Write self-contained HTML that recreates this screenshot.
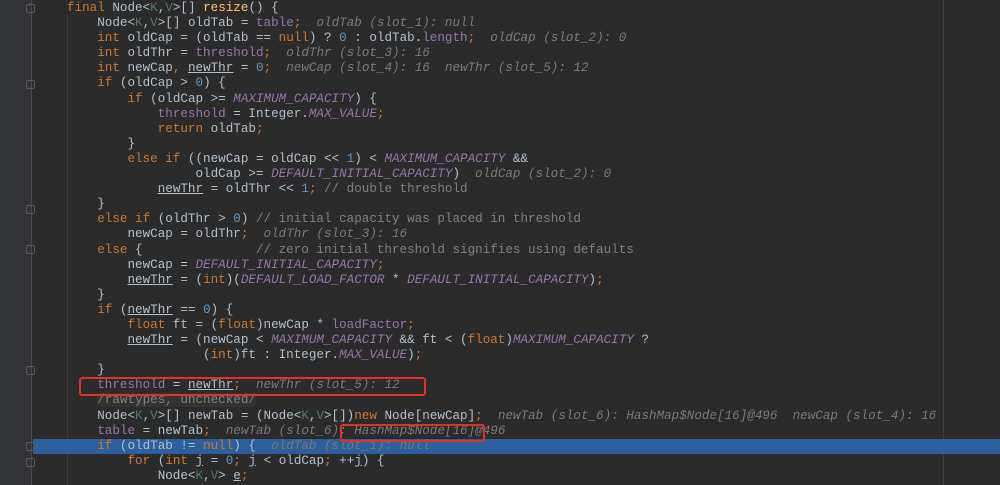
<!DOCTYPE html>
<html><head><meta charset="utf-8"><style>
body{margin:0;width:1000px;height:485px;background:#2b2b2b;overflow:hidden;position:relative;font-family:"Liberation Mono",monospace;font-size:12.6px;color:#b3c0cc}
.g{position:absolute;left:0;top:0;width:32px;height:485px;background:#313335}
.gl{position:absolute;left:31px;top:0;width:1px;height:485px;background:#4a4a4a}
.ig{position:absolute;left:67px;top:15px;width:1px;height:470px;background:#3b3b3b}
.rm{position:absolute;left:943px;top:0;width:1px;height:485px;background:#3d3d3d}
.hl{position:absolute;left:33px;top:439px;width:967px;height:15px;background:#2d5f9c}
.code{position:absolute;left:67px;top:1px;white-space:pre;line-height:15.1px}
.k{color:#cc7832}.f{color:#9876aa}.n{color:#6897bb}.c{color:#808080}.t{color:#507874}.m{color:#ffc66d}
.ci{color:#9876aa;font-style:italic}.d{color:#7a7a7a;font-style:italic}.u{text-decoration:underline}
.box{position:absolute;border:2px solid #e0322a;border-radius:3px}
.fm{position:absolute;left:26px;width:9px;height:9px;border:1px solid #5a5a5a;border-radius:2px;box-sizing:border-box}
</style></head><body>
<div class="g"></div><div class="gl"></div><div class="ig"></div><div class="rm"></div>
<div class="hl"></div>
<div class="fm" style="top:4px"></div><div class="fm" style="top:80px"></div><div class="fm" style="top:205px"></div><div class="fm" style="top:245px"></div><div class="fm" style="top:366px"></div><div class="fm" style="top:442px"></div><div class="fm" style="top:458px"></div>
<div class="code"><span class="k">final</span> Node&lt;<span class="t">K</span>,<span class="t">V</span>&gt;[] <span class="m">resize</span>() {
    Node&lt;<span class="t">K</span>,<span class="t">V</span>&gt;[] oldTab = <span class="f">table</span><span class="k">;</span>  <span class="d">oldTab (slot_1): null</span>
    <span class="k">int</span> oldCap = (oldTab == <span class="k">null</span>) ? <span class="n">0</span> : oldTab.<span class="f">length</span><span class="k">;</span>  <span class="d">oldCap (slot_2): 0</span>
    <span class="k">int</span> oldThr = <span class="f">threshold</span><span class="k">;</span>  <span class="d">oldThr (slot_3): 16</span>
    <span class="k">int</span> newCap<span class="k">,</span> <span class="u">newThr</span> = <span class="n">0</span><span class="k">;</span>  <span class="d">newCap (slot_4): 16  newThr (slot_5): 12</span>
    <span class="k">if</span> (oldCap &gt; <span class="n">0</span>) {
        <span class="k">if</span> (oldCap &gt;= <span class="ci">MAXIMUM_CAPACITY</span>) {
            <span class="f">threshold</span> = Integer.<span class="ci">MAX_VALUE</span><span class="k">;</span>
            <span class="k">return</span> oldTab<span class="k">;</span>
        }
        <span class="k">else if</span> ((newCap = oldCap &lt;&lt; <span class="n">1</span>) &lt; <span class="ci">MAXIMUM_CAPACITY</span> &amp;&amp;
                 oldCap &gt;= <span class="ci">DEFAULT_INITIAL_CAPACITY</span>)  <span class="d">oldCap (slot_2): 0</span>
            <span class="u">newThr</span> = oldThr &lt;&lt; <span class="n">1</span><span class="k">;</span> <span class="c">// double threshold</span>
    }
    <span class="k">else if</span> (oldThr &gt; <span class="n">0</span>) <span class="c">// initial capacity was placed in threshold</span>
        newCap = oldThr<span class="k">;</span>  <span class="d">oldThr (slot_3): 16</span>
    <span class="k">else</span> {               <span class="c">// zero initial threshold signifies using defaults</span>
        newCap = <span class="ci">DEFAULT_INITIAL_CAPACITY</span><span class="k">;</span>
        <span class="u">newThr</span> = (<span class="k">int</span>)(<span class="ci">DEFAULT_LOAD_FACTOR</span> * <span class="ci">DEFAULT_INITIAL_CAPACITY</span>)<span class="k">;</span>
    }
    <span class="k">if</span> (<span class="u">newThr</span> == <span class="n">0</span>) {
        <span class="k">float</span> ft = (<span class="k">float</span>)newCap * <span class="f">loadFactor</span><span class="k">;</span>
        <span class="u">newThr</span> = (newCap &lt; <span class="ci">MAXIMUM_CAPACITY</span> &amp;&amp; ft &lt; (<span class="k">float</span>)<span class="ci">MAXIMUM_CAPACITY</span> ?
                  (<span class="k">int</span>)ft : Integer.<span class="ci">MAX_VALUE</span>)<span class="k">;</span>
    }
    <span class="f">threshold</span> = <span class="u">newThr</span><span class="k">;</span>  <span class="d">newThr (slot_5): 12</span>
    <span class="c" style="background:#333">/rawtypes, unchecked/</span>
    Node&lt;<span class="t">K</span>,<span class="t">V</span>&gt;[] newTab = (Node&lt;<span class="t">K</span>,<span class="t">V</span>&gt;[])<span class="k">new</span> Node[newCap]<span class="k">;</span>  <span class="d">newTab (slot_6): HashMap$Node[16]@496  newCap (slot_4): 16</span>
    <span class="f">table</span> = newTab<span class="k">;</span>  <span class="d">newTab (slot_6): HashMap$Node[16]@496</span>
    <span class="k">if</span> (oldTab != <span class="k">null</span>) {  <span class="d">oldTab (slot_1): null</span>
        <span class="k">for</span> (<span class="k">int</span> <span class="u">j</span> = <span class="n">0</span><span class="k">;</span> <span class="u">j</span> &lt; oldCap<span class="k">;</span> ++<span class="u">j</span>) {
            Node&lt;<span class="t">K</span>,<span class="t">V</span>&gt; <span class="u">e</span><span class="k">;</span></div>
<div class="box" style="left:79px;top:377px;width:343px;height:15px"></div>
<div class="box" style="left:340px;top:424px;width:141px;height:14px"></div>
</body></html>
